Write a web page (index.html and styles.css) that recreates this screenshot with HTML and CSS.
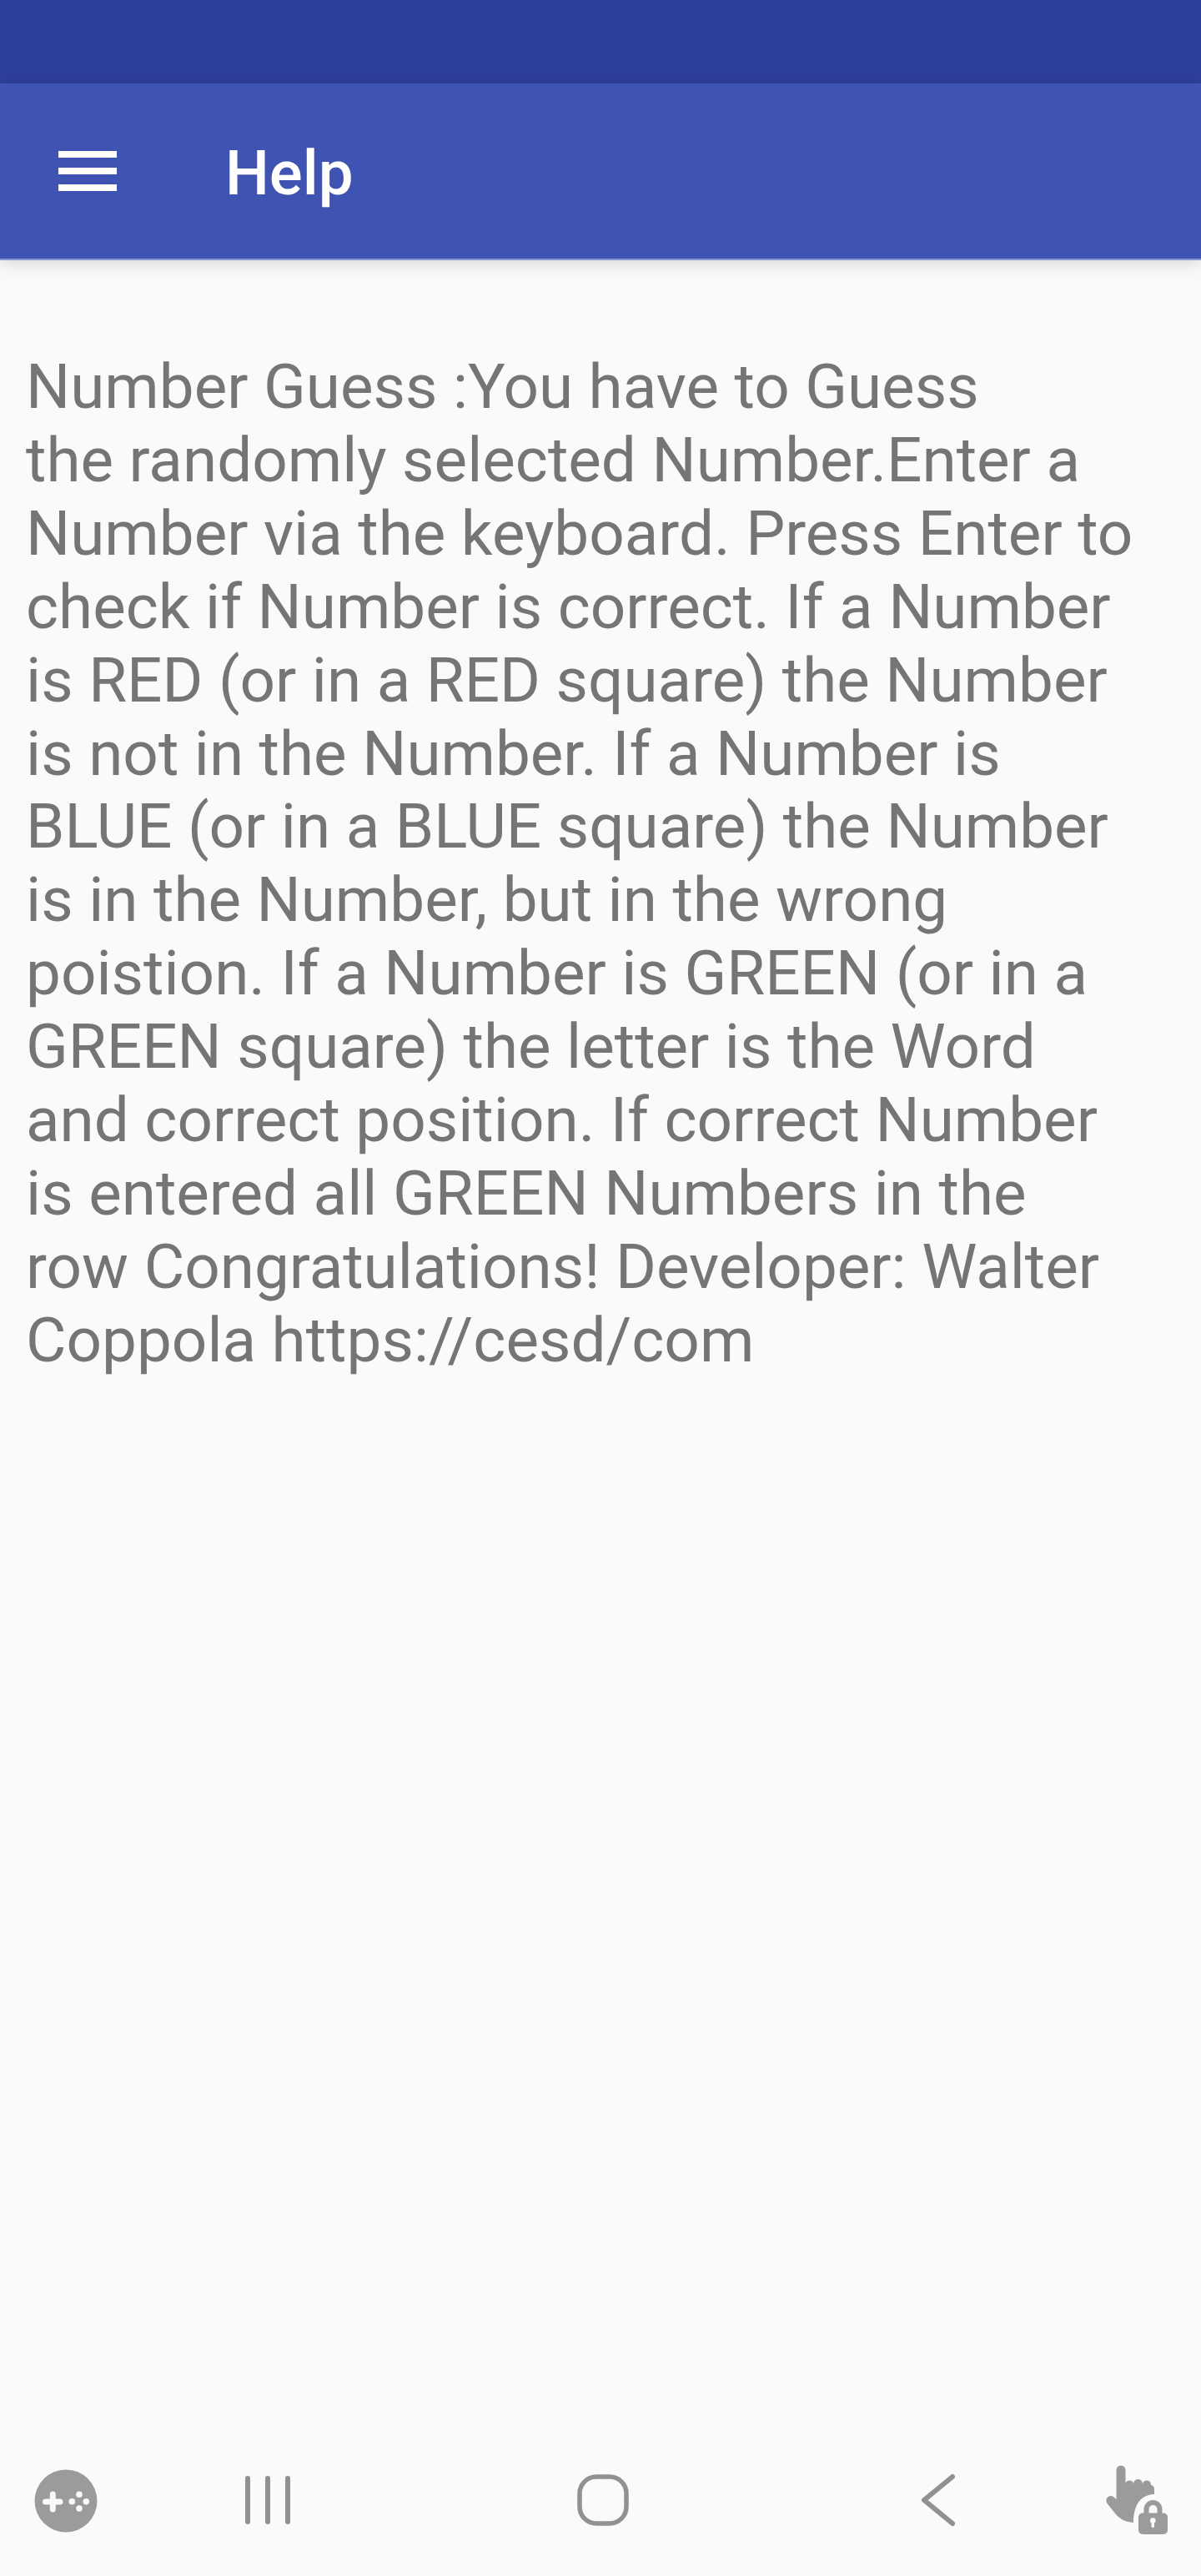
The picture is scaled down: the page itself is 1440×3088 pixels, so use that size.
FILE: index.html
```html
<!DOCTYPE html>
<html lang="en">
<head>
    <meta charset="UTF-8">
    <meta name="viewport" content="width=device-width, initial-scale=1.0">
    <title>Help</title>
    <link rel="stylesheet" href="styles.css">
</head>
<body>
    <div id="statusbar"></div>
    <div id="appbar">
        <svg class="menu-icon" width="70" height="48" viewBox="0 0 70 48">
            <rect x="0" y="0" width="70" height="8" fill="#fff"></rect>
            <rect x="0" y="20" width="70" height="8" fill="#fff"></rect>
            <rect x="0" y="40" width="70" height="8" fill="#fff"></rect>
        </svg>
        <h1 id="title">Help</h1>
    </div>
    <div id="content">
        <p id="help-text">Number Guess :You have to Guess<br>the randomly selected Number.Enter a Number via the keyboard. Press Enter to check if Number is correct. If a Number is RED (or in a RED square) the Number is not in the Number. If a Number is BLUE (or in a BLUE square) the Number is in the Number, but in the wrong poistion. If a Number is GREEN (or in a GREEN square) the letter is the Word and correct position. If correct Number is entered all GREEN Numbers in the row Congratulations! Developer: Walter Coppola https://cesd/com</p>
    </div>
    <div id="navbar">
        <svg class="game-icon" width="76" height="76" viewBox="0 0 76 76">
            <circle cx="38" cy="38" r="37.5" fill="#9b9b9b"></circle>
            <path d="M13.500 39H31M22.300 30V48" stroke="#fafafa" stroke-width="7" stroke-linecap="round"></path>
            <circle cx="45.300" cy="38.700" r="3.800" fill="#fafafa"></circle>
            <circle cx="54" cy="30.300" r="3.800" fill="#fafafa"></circle>
            <circle cx="54" cy="47" r="3.800" fill="#fafafa"></circle>
            <circle cx="62.300" cy="38.700" r="3.800" fill="#fafafa"></circle>
        </svg>
        <svg width="54" height="58" viewBox="0 0 54 58">
            <path d="M3 3V55M27 3V55M51 3V55" stroke="#919191" stroke-width="6" stroke-linecap="round"></path>
        </svg>
        <svg width="62" height="62" viewBox="0 0 62 62">
            <rect x="3" y="3" width="56" height="56" rx="20" fill="none" stroke="#919191" stroke-width="5.500"></rect>
        </svg>
        <svg width="44" height="64" viewBox="0 0 44 64">
            <path d="M38 4L4 32L38 60" fill="none" stroke="#919191" stroke-width="6" stroke-linecap="round" stroke-linejoin="round"></path>
        </svg>
        <svg class="hand-icon" width="120" height="110" viewBox="0 0 120 110">
            <path d="M38.500 21A5.500 5.500 0 0 1 49.500 21V37A5 5 0 0 1 59 37A5 5 0 0 1 70 38A5 5 0 0 1 80 39A5 5 0 0 1 84 44V50C72 50 59 58 59 84C48 83 42 79 37 73L27.500 61A5.500 5.500 0 0 1 35.500 53.500L38.500 56Z" fill="#9b9b9b"></path>
            <path d="M71.500 74V68A11 11 0 0 1 93.500 68V74H87.500V68A5 5 0 0 0 77.500 68V74Z" fill="#9b9b9b"></path>
            <rect x="65" y="72.500" width="35" height="25.500" rx="5" fill="#9b9b9b"></rect>
            <circle cx="82.300" cy="81.500" r="3.300" fill="#fafafa"></circle>
            <rect x="80.600" y="82" width="3.400" height="8" rx="1.500" fill="#fafafa"></rect>
        </svg>
    </div>
</body>
</html>
```
FILE: styles.css
```css
html, body{
    height: 100%;
}
body{
    font-family: Roboto, sans-serif;
    background-color: #fafafa;
    margin: 0;
    display: flex;
    flex-direction: column;
}
#statusbar{
    height: 100px;
    background-color: #2e3f9c;
}
#appbar{
    display: flex;
    align-items: center;
    height: 210px;
    padding-left: 70px;
    background-color: #3e53b2;
    border-bottom: 2px solid #8795d0;
    box-shadow: 0 4px 20px rgba(0,0,0,0.14);
}
.menu-icon{
    flex: none;
    margin-right: 130px;
}
#title{
    margin: 4px 0 0;
    color: white;
    font-size: 74.5px;
    font-weight: 500;
}
#content{
    flex: 1;
    padding: 0 76px 0 31px;
}
#help-text{
    margin: 0;
    padding-top: 108px;
    color: #757575;
    font-size: 74.6px;
    line-height: 87.9px;
}
#navbar{
    display: grid;
    grid-template-columns: 158px 326px 478px 328px 140px;
    align-items: center;
    justify-items: center;
    box-sizing: border-box;
    height: 180px;
    padding-bottom: 3px;
}
.game-icon{
    margin-top: 3px;
}
.hand-icon{
    margin-bottom: 3px;
}
```
